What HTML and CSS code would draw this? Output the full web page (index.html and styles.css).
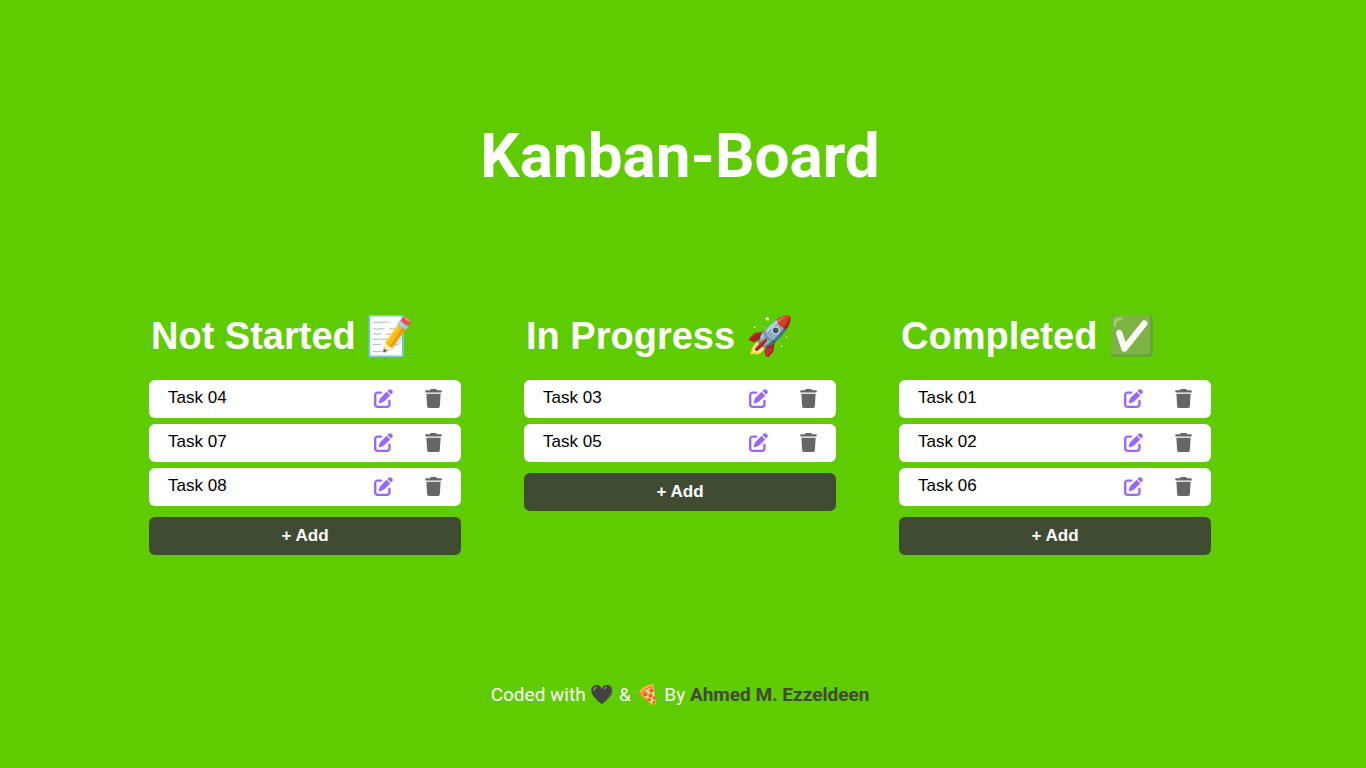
FILE: index.html
```
<!DOCTYPE html>
<html lang="en">
<head>
<meta charset="utf-8">
<meta name="viewport" content="width=device-width, initial-scale=1">
<title>Kanban-Board</title>
<link rel="stylesheet" href="styles.css">
</head>
<body>
<svg class="sprite" aria-hidden="true">
  <symbol id="edit" viewBox="0 0 512 512"><path d="M471.600 21.700c-21.900-21.900-57.300-21.900-79.200 0L362.300 51.700l97.900 97.900 30.100-30.100c21.900-21.900 21.900-57.300 0-79.200L471.600 21.700zm-299.200 220c-6.100 6.100-10.800 13.600-13.500 21.900l-29.600 88.800c-2.900 8.600-.6 18.100 5.800 24.600s15.900 8.700 24.600 5.800l88.800-29.600c8.200-2.700 15.700-7.400 21.900-13.500L437.700 172.300 339.700 74.300 172.400 241.700zM96 64C43 64 0 107 0 160V416c0 53 43 96 96 96H352c53 0 96-43 96-96V320c0-17.700-14.300-32-32-32s-32 14.300-32 32v96c0 17.700-14.300 32-32 32H96c-17.700 0-32-14.300-32-32V160c0-17.700 14.300-32 32-32h96c17.700 0 32-14.300 32-32s-14.300-32-32-32H96z"/></symbol>
  <symbol id="trash" viewBox="0 0 448 512"><path d="M135.200 17.700L128 32H32C14.300 32 0 46.300 0 64S14.300 96 32 96H416c17.700 0 32-14.300 32-32s-14.300-32-32-32H320l-7.200-14.300C307.400 6.800 296.300 0 284.200 0H163.800c-12.100 0-23.200 6.800-28.600 17.700zM416 128H32L53.200 467c1.600 25.300 22.600 45 47.900 45H346.900c25.300 0 46.300-19.700 47.900-45L416 128z"/></symbol>
</svg>
<div class="page">
  <header class="header"><h1 class="title">Kanban-Board</h1></header>
  <main class="board">
    <section class="column">
      <h2 class="column-title">Not Started 📝</h2>
      <ul class="tasks">
        <li class="task"><span class="name">Task 04</span><button class="icon edit" aria-label="Edit Task 04"><svg><use href="#edit"/></svg></button><button class="icon trash" aria-label="Delete Task 04"><svg><use href="#trash"/></svg></button></li>
        <li class="task"><span class="name">Task 07</span><button class="icon edit" aria-label="Edit Task 07"><svg><use href="#edit"/></svg></button><button class="icon trash" aria-label="Delete Task 07"><svg><use href="#trash"/></svg></button></li>
        <li class="task"><span class="name">Task 08</span><button class="icon edit" aria-label="Edit Task 08"><svg><use href="#edit"/></svg></button><button class="icon trash" aria-label="Delete Task 08"><svg><use href="#trash"/></svg></button></li>
      </ul>
      <button class="add">+ Add</button>
    </section>
    <section class="column">
      <h2 class="column-title">In Progress 🚀</h2>
      <ul class="tasks">
        <li class="task"><span class="name">Task 03</span><button class="icon edit" aria-label="Edit Task 03"><svg><use href="#edit"/></svg></button><button class="icon trash" aria-label="Delete Task 03"><svg><use href="#trash"/></svg></button></li>
        <li class="task"><span class="name">Task 05</span><button class="icon edit" aria-label="Edit Task 05"><svg><use href="#edit"/></svg></button><button class="icon trash" aria-label="Delete Task 05"><svg><use href="#trash"/></svg></button></li>
      </ul>
      <button class="add">+ Add</button>
    </section>
    <section class="column">
      <h2 class="column-title">Completed ✅</h2>
      <ul class="tasks">
        <li class="task"><span class="name">Task 01</span><button class="icon edit" aria-label="Edit Task 01"><svg><use href="#edit"/></svg></button><button class="icon trash" aria-label="Delete Task 01"><svg><use href="#trash"/></svg></button></li>
        <li class="task"><span class="name">Task 02</span><button class="icon edit" aria-label="Edit Task 02"><svg><use href="#edit"/></svg></button><button class="icon trash" aria-label="Delete Task 02"><svg><use href="#trash"/></svg></button></li>
        <li class="task"><span class="name">Task 06</span><button class="icon edit" aria-label="Edit Task 06"><svg><use href="#edit"/></svg></button><button class="icon trash" aria-label="Delete Task 06"><svg><use href="#trash"/></svg></button></li>
      </ul>
      <button class="add">+ Add</button>
    </section>
  </main>
  <footer class="footer">Coded with 🖤 &amp; 🍕 By <a class="author" href="#">Ahmed M. Ezzeldeen</a></footer>
</div>
</body>
</html>
```
FILE: styles.css
```
* { box-sizing: border-box; }
body {
  margin: 0;
  background: #5ecc00;
  color: #fff;
  font-family: Roboto, sans-serif;
}
.sprite { display: none; }
.page {
  min-height: 100vh;
  padding: 0 155px 0 149px;
  display: flex;
  flex-direction: column;
}
.header { padding-top: 118px; text-align: center; }
.title { margin: 0; font-size: 62px; line-height: 75px; }
.board {
  display: grid;
  grid-template-columns: repeat(3, 1fr);
  gap: 63px;
  padding-top: 121px;
  align-items: start;
  font-family: "Liberation Sans", Arial, sans-serif;
}
.column-title { margin: 0 0 22px; padding-left: 2px; font-size: 38px; line-height: 44px; white-space: nowrap; }
.tasks { margin: 0 0 11px; padding: 0; list-style: none; display: grid; gap: 6px; }
.task {
  display: flex;
  align-items: center;
  height: 38px;
  padding: 0 18px 2px 19px;
  border-radius: 6px;
  background: #fff;
  color: #000;
  font-size: 17px;
}
.name { flex: 1; }
.icon { display: flex; padding: 0; border: 0; background: none; cursor: pointer; }
.icon svg { width: 19px; height: 19px; fill: currentColor; }
.edit { margin-right: 31px; color: #9966ff; }
.trash { color: #666; }
.add {
  display: block;
  width: 100%;
  height: 38px;
  border: 0;
  border-radius: 6px;
  background: #3f4b33;
  color: #fff;
  font: bold 17px "Liberation Sans", Arial, sans-serif;
  cursor: pointer;
}
.footer { margin-top: auto; padding-bottom: 62px; text-align: center; font-size: 19px; line-height: 22px; }
.author { color: #3f4b33; font-weight: bold; text-decoration: none; }
```
